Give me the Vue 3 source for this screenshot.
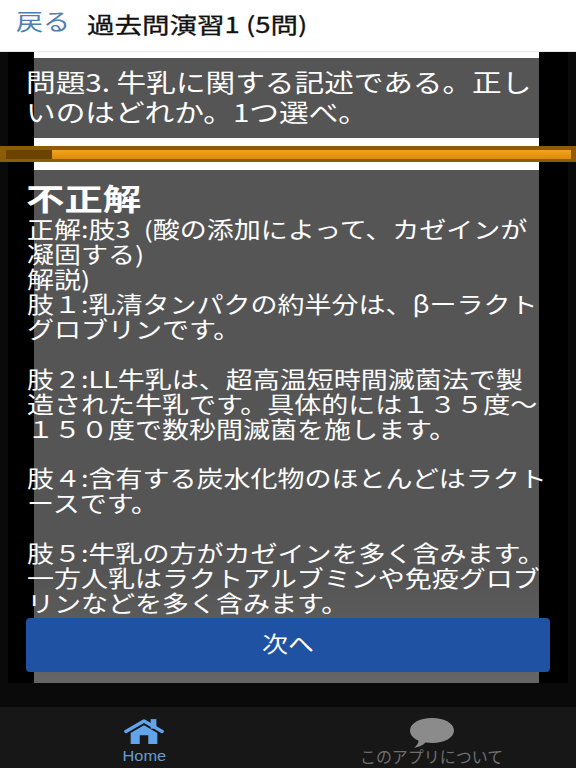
<script setup>
const questionLines = ['問題3. 牛乳に関する記述である。正し', 'いのはどれか。1つ選べ。']
const bodyLines = [
  '正解:肢3 (酸の添加によって、カゼインが',
  '凝固する)',
  '解説)',
  '肢１:乳清タンパクの約半分は、βーラクト',
  'グロブリンです。',
  ' ',
  '肢２:LL牛乳は、超高温短時間滅菌法で製',
  '造された牛乳です。具体的には１３５度～',
  '１５０度で数秒間滅菌を施します。',
  ' ',
  '肢４:含有する炭水化物のほとんどはラクト',
  'ースです。',
  ' ',
  '肢５:牛乳の方がカゼインを多く含みます。',
  '一方人乳はラクトアルブミンや免疫グロブ',
  'リンなどを多く含みます。',
]
</script>

<template>
  <div class="screen">
    <header class="nav">
      <span class="back">戻る</span>
      <span class="title">過去問演習1 (5問)</span>
    </header>

    <main class="stage">
      <div class="frame">
        <div class="column">
          <section class="question">
            <div v-for="(line, i) in questionLines" :key="i" class="q-line">{{ line }}</div>
          </section>
          <div class="progress">
            <div class="progress-track">
              <div class="progress-done"></div>
            </div>
          </div>
          <section class="answer">
            <div class="verdict">不正解</div>
            <div v-for="(line, i) in bodyLines" :key="i" class="a-line">{{ line }}</div>
          </section>
        </div>
      </div>
      <button class="next"><span class="next-text">次へ</span></button>
    </main>

    <nav class="tabs">
      <div class="tab tab-home">
        <svg class="icon" width="40" height="27" viewBox="0 0 42 28">
          <rect x="28" y="1" width="6" height="10" fill="#62a4ec" />
          <path d="M2 14 L21 3 L40 14" fill="none" stroke="#62a4ec" stroke-width="3.6" stroke-linecap="round" stroke-linejoin="round" />
          <path fill-rule="evenodd" fill="#62a4ec" d="M7 15.5 L21 7.5 L35 15.5 V27 H25.5 V18 H16.5 V27 H7 Z" />
        </svg>
        <span class="label">Home</span>
      </div>
      <div class="tab tab-about">
        <svg class="icon" width="46" height="30" viewBox="0 0 46 30">
          <path fill="#8b8b8b" d="M23 0 C35.5 0 45 5.4 45 12.5 C45 19.6 35.5 25 23 25 C20.8 25 18.6 24.8 16.6 24.5 C13.6 27.3 9.8 29 5 30 C7.8 27.6 9.2 25.4 9.6 22.8 C4.2 20.4 1 16.6 1 12.5 C1 5.4 10.5 0 23 0 Z" />
        </svg>
        <span class="label">このアプリについて</span>
      </div>
    </nav>
  </div>
</template>

<style scoped>
.screen {
  width: 576px;
  height: 768px;
  display: flex;
  flex-direction: column;
  overflow: hidden;
  font-family: "Noto Sans CJK JP", "Liberation Sans", sans-serif;
}
.nav {
  height: 52px;
  flex: none;
  box-sizing: border-box;
  background: #fff;
  border-bottom: 1px solid #e8e8ea;
  display: flex;
  align-items: center;
  gap: 27px;
  padding: 0 0 6px 16px;
}
.back {
  width: 44px;
  font-size: 22.5px;
  line-height: 30px;
  color: #4b80b4;
  white-space: nowrap;
  margin-bottom: 5px;
  transform: scaleX(1.2);
  transform-origin: left center;
}
.title {
  font-size: 22px;
  font-weight: 400;
  line-height: 30px;
  color: #111;
  white-space: nowrap;
  -webkit-text-stroke: 0.3px #111;
  transform: scaleX(1.25);
  transform-origin: left center;
}
.stage {
  position: relative;
  flex: none;
  height: 655px;
  background: #0a0a0a;
  padding: 0 8px;
  box-sizing: border-box;
}
.frame {
  height: 631px;
  background: #000;
  padding: 0 29px 0 26px;
}
.column {
  height: 100%;
  background: #fff;
  display: flex;
  flex-direction: column;
  padding-top: 6px;
  box-sizing: border-box;
}
.question {
  height: 80px;
  flex: none;
  background: #555;
  box-sizing: border-box;
  padding-top: 9px;
  color: #fff;
}
.q-line {
  margin-left: -8px;
  font-size: 24.5px;
  line-height: 30px;
  white-space: nowrap;
  transform: scaleX(1.21);
  transform-origin: left center;
}
.progress {
  flex: none;
  height: 16px;
  margin: 8px -37px 8px -34px;
  box-sizing: border-box;
  background: #8e5c06;
  padding: 4px 5px 3px 6px;
}
.progress-track {
  height: 100%;
  background: linear-gradient(#f0a41c, #de8a08);
}
.progress-done {
  width: 46px;
  height: 100%;
  background: #6a4300;
}
.answer {
  flex: 1;
  background: linear-gradient(#555 0%, #555 80%, #656565 100%);
  box-sizing: border-box;
  padding-top: 9px;
  color: #fff;
  overflow: visible;
}
.verdict {
  margin-left: -8px;
  font-size: 30px;
  font-weight: 700;
  line-height: 37px;
  white-space: nowrap;
  transform: scaleX(1.28);
  transform-origin: left center;
}
.a-line {
  margin-left: -7.5px;
  height: 24.95px;
  font-size: 22.5px;
  line-height: 24.95px;
  white-space: pre;
  word-spacing: 6px;
  transform: scaleX(1.2);
  transform-origin: left center;
}
.next {
  position: absolute;
  left: 26px;
  top: 566px;
  width: 524px;
  height: 54px;
  border: none;
  border-radius: 4px;
  background: #1f52a3;
  color: #fff;
  font-family: inherit;
  padding: 0 0 6px;
}
.next-text {
  display: inline-block;
  font-size: 22px;
  line-height: 30px;
  transform: scaleX(1.18);
}
.tabs {
  flex: 1;
  background: #171717;
  display: flex;
}
.tab {
  flex: 1;
  display: flex;
  flex-direction: column;
  align-items: center;
  padding-top: 11px;
}
.icon {
  display: block;
  flex: none;
}
.tab-home .icon {
  margin-bottom: 2px;
}
.tab-about .icon {
  margin-bottom: -1px;
}
.label {
  font-size: 13.5px;
  line-height: 18px;
  white-space: nowrap;
}
.tab-home .label {
  color: #6a9ad2;
  font-family: "Liberation Sans", sans-serif;
  font-size: 14.5px;
  transform: scaleX(1.13);
}
.tab-about .label {
  color: #6e6e6e;
  font-size: 15.5px;
  transform: scaleX(1.03);
}
</style>
